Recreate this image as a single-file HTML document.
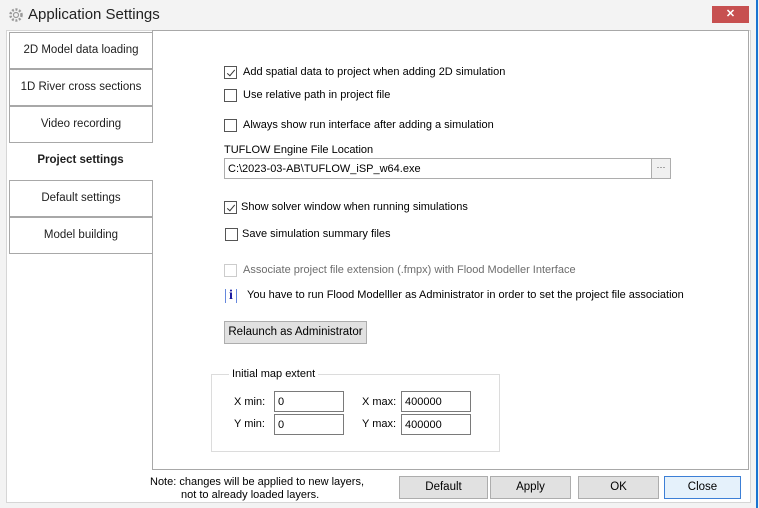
<!DOCTYPE html>
<html><head><style>
*{box-sizing:border-box;margin:0;padding:0}
body{width:759px;height:508px;background:#f3f3f3;font-family:"Liberation Sans",sans-serif;font-size:11px;color:#000;position:relative;overflow:hidden}
.a{position:absolute;white-space:nowrap}
.title{left:28px;top:6px;font-size:15px;color:#222}
.close{left:712px;top:6px;width:37px;height:17px;background:#c75050;color:#fff;text-align:center;font-size:11px;line-height:17px;font-weight:bold}
.blue{left:756px;top:0;width:2px;height:508px;background:#1a74d1}
.client{left:6px;top:30px;width:745px;height:473px;background:#fff;border:1px solid #d6d6d6}
.panel{left:152px;top:30px;width:597px;height:440px;border:1px solid #a8a8a8;background:#fff}
.tab{left:9px;width:144px;height:37px;border:1px solid #a8a8a8;background:#fff;text-align:center;line-height:35px;font-size:11.5px;color:#1e1e1e}
.sel{left:7px;width:147px;border:none;font-weight:bold;background:#fff}
.cb{width:13px;height:13px;border:1px solid #555;background:#fff}
.cb.chk::after{content:"";position:absolute;left:3.5px;top:0.5px;width:3px;height:7px;border:solid #333;border-width:0 1.5px 1.5px 0;transform:rotate(40deg)}
.dis{border-color:#ccc}
.btn{height:23px;border:1px solid #adadad;background:#e1e1e1;text-align:center;line-height:21px;font-size:11.5px}
.inp{height:21px;border:1px solid #7a7a7a;background:#fff;padding-left:3px;line-height:19px;font-size:11px}
</style></head><body>
<div class="a blue"></div>
<svg class="a" style="left:8px;top:7px" width="16" height="16" viewBox="0 0 16 16"><circle cx="8" cy="8" r="5.5" fill="none" stroke="#999" stroke-width="2.5" stroke-dasharray="2 1.6"/><circle cx="8" cy="8" r="2.5" fill="none" stroke="#999" stroke-width="1.2"/></svg>
<div class="a title">Application Settings</div>
<div class="a close">✕</div>
<div class="a client"></div>
<div class="a panel"></div>
<div class="a tab" style="top:32px">2D Model data loading</div>
<div class="a tab" style="top:69px">1D River cross sections</div>
<div class="a tab" style="top:106px">Video recording</div>
<div class="a tab sel" style="top:143px">Project settings</div>
<div class="a tab" style="top:180px">Default settings</div>
<div class="a tab" style="top:217px">Model building</div>

<div class="a cb chk" style="left:224px;top:66px"></div><div class="a" style="left:243px;top:66px">Add spatial data to project when adding 2D simulation</div>
<div class="a cb" style="left:224px;top:89px"></div><div class="a" style="left:243px;top:89px">Use relative path in project file</div>
<div class="a cb" style="left:224px;top:119px"></div><div class="a" style="left:243px;top:119px">Always show run interface after adding a simulation</div>
<div class="a" style="left:224px;top:144px">TUFLOW Engine File Location</div>
<div class="a inp" style="left:224px;top:158px;width:447px;border-color:#adadad;line-height:20px">C:\2023-03-AB\TUFLOW_iSP_w64.exe</div>
<div class="a" style="left:651px;top:159px;width:19px;height:19px;border-left:1px solid #adadad;background:#f0f0f0;text-align:center;line-height:17px;font-size:9px;color:#444">···</div>
<div class="a cb chk" style="left:224px;top:201px"></div><div class="a" style="left:241px;top:201px">Show solver window when running simulations</div>
<div class="a cb" style="left:225px;top:228px"></div><div class="a" style="left:242px;top:228px">Save simulation summary files</div>
<div class="a cb dis" style="left:224px;top:264px"></div><div class="a" style="left:243px;top:264px;color:#6d6d6d">Associate project file extension (.fmpx) with Flood Modeller Interface</div>
<div class="a" style="left:225px;top:289px;color:#1a1aa0;font-family:'Liberation Serif',serif;font-weight:bold;font-size:14px;border-left:1px solid #6688dd;border-right:1px solid #6688dd;padding:0 3px;line-height:14px">i</div>
<div class="a" style="left:247px;top:289px">You have to run Flood Modelller as Administrator in order to set the project file association</div>
<div class="a btn" style="left:224px;top:321px;width:143px">Relaunch as Administrator</div>

<div class="a" style="left:211px;top:374px;width:289px;height:78px;border:1px solid #dcdcdc"></div>
<div class="a" style="left:229px;top:368px;background:#fff;padding:0 3px">Initial map extent</div>
<div class="a" style="left:234px;top:396px">X min:</div>
<div class="a inp" style="left:274px;top:391px;width:70px;line-height:20px">0</div>
<div class="a" style="left:362px;top:396px">X max:</div>
<div class="a inp" style="left:401px;top:391px;width:70px;line-height:20px">400000</div>
<div class="a" style="left:234px;top:418px">Y min:</div>
<div class="a inp" style="left:274px;top:414px;width:70px;line-height:20px">0</div>
<div class="a" style="left:362px;top:418px">Y max:</div>
<div class="a inp" style="left:401px;top:414px;width:70px;line-height:20px">400000</div>

<div class="a" style="left:150px;top:475px;line-height:14px">Note: changes will be applied to new layers,</div>
<div class="a" style="left:181px;top:488px;line-height:14px">not to already loaded layers.</div>
<div class="a btn" style="left:399px;top:476px;width:89px">Default</div>
<div class="a btn" style="left:490px;top:476px;width:81px">Apply</div>
<div class="a btn" style="left:578px;top:476px;width:81px">OK</div>
<div class="a btn" style="left:664px;top:476px;width:77px;border-color:#3c7fd6;background:#e5f1fb">Close</div>
</body></html>
